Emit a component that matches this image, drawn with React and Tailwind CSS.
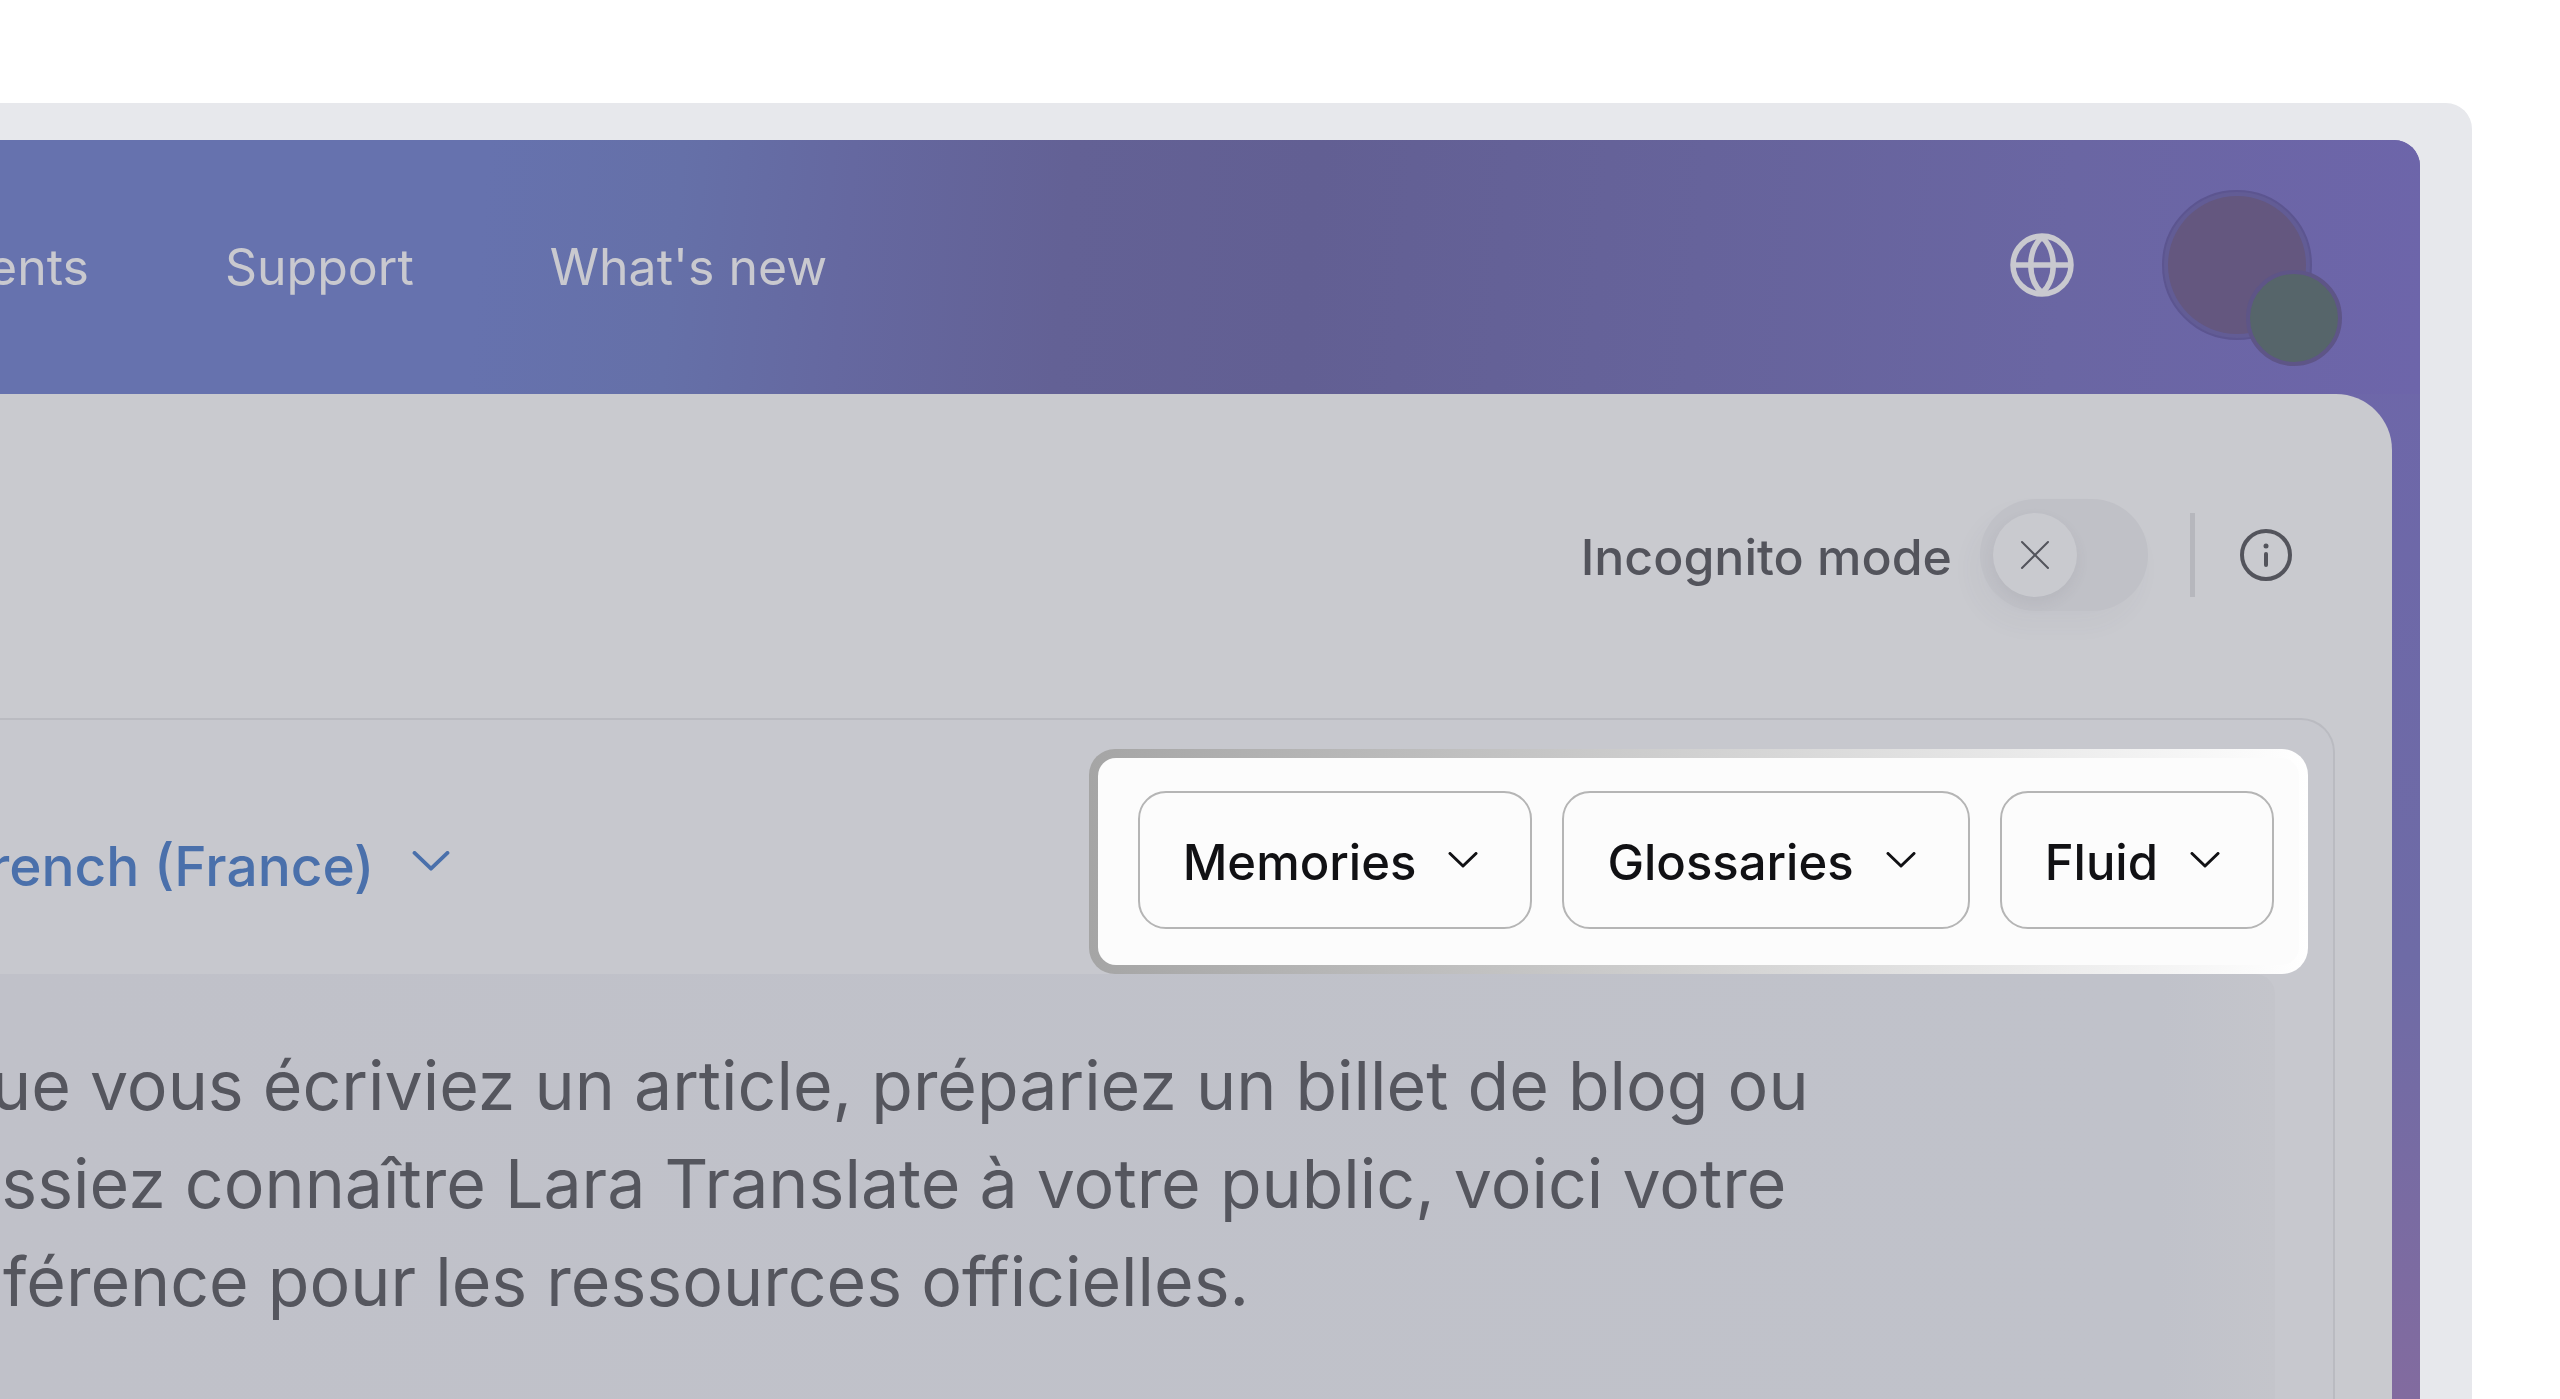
import React from 'react';

const Chevron = ({ className }) => (
    <svg viewBox="0 0 30 16" fill="none" stroke="currentColor" strokeWidth="3" strokeLinecap="round" strokeLinejoin="round" className={className} aria-hidden="true">
        <path d="M2 1.5 L15 14 L28 1.5" />
    </svg>
);

const GlobeIcon = () => (
    <svg viewBox="0 0 64 64" fill="none" stroke="currentColor" strokeWidth="5.5" strokeLinejoin="round" className="size-16" aria-hidden="true">
        <circle cx="32" cy="32" r="29" />
        <path d="M32 4 C17 18 17 46 32 60 C47 46 47 18 32 4 Z" />
        <path d="M3 32 H61" />
    </svg>
);

const InfoIcon = () => (
    <svg viewBox="0 0 52 52" fill="none" stroke="currentColor" strokeWidth="4" className="size-[52px]" aria-hidden="true">
        <circle cx="26" cy="26" r="24" />
        <path d="M26 25 V36" strokeLinecap="round" />
        <circle cx="26" cy="17" r="2.5" fill="currentColor" stroke="none" />
    </svg>
);

const Header = () => (
    <header className="flex h-[254px] items-center justify-between rounded-tr-[26px] bg-[linear-gradient(95deg,#6672ae_0%,#6672ae_20%,#6570a8_28%,#6568a0_35%,#636195_44%,#625f93_54%,#66639b_70%,#6a66a3_85%,#6d65aa_100%)] pr-[108px] text-[#c9c9cf]">
        <nav className="-ml-[180px] flex gap-[136px] whitespace-nowrap text-[50px] leading-[60px]">
            <a href="#documents">Documents</a>
            <a href="#support">Support</a>
            <a href="#whats-new">What's new</a>
        </nav>
        <div className="flex items-center gap-[88px] pb-1">
            <button type="button" aria-label="Language">
                <GlobeIcon />
            </button>
            <button type="button" aria-label="Account" className="relative size-[150px] rounded-full border-2 border-[#5c5590] bg-[#625c95] p-1">
                <span className="block size-full rounded-full bg-[#64577f]"></span>
                <span className="absolute -right-8 -bottom-7 size-24 rounded-full border-4 border-[#5e5587] bg-[#56656a]"></span>
            </button>
        </div>
    </header>
);

const Toolbar = () => (
    <div className="flex h-[324px] items-center justify-end pr-[100px] pb-[3px] text-[#53545c]">
        <label htmlFor="incognito" className="mr-[28px] pt-1 text-[50px] leading-[60px] font-medium">Incognito mode</label>
        <div className="relative h-28 w-[168px]">
            <input id="incognito" type="checkbox" role="switch" className="block size-full appearance-none rounded-full bg-[#c0c1c7] shadow-[-8px_14px_24px_rgba(80,80,95,0.04)]" />
            <span className="pointer-events-none absolute top-[14px] left-[13px] flex size-[84px] items-center justify-center rounded-full bg-[#c9cacf] shadow-[0_6px_14px_rgba(80,80,95,0.08)]">
                <svg viewBox="0 0 30 30" fill="none" stroke="currentColor" strokeWidth="2" strokeLinecap="round" className="size-[30px]" aria-hidden="true">
                    <path d="M2 2 L28 28 M28 2 L2 28" />
                </svg>
            </span>
        </div>
        <span className="mr-[45px] ml-[42px] h-[84px] w-[5px] bg-[#b6b7bd]"></span>
        <button type="button" aria-label="About incognito mode">
            <InfoIcon />
        </button>
    </div>
);

const OptionButton = ({ label }) => (
    <button type="button" className="flex h-[138px] items-center gap-[32px] rounded-[28px] border-2 border-[#b5b5b5] pr-[52px] pl-[43px] text-[49px] leading-[60px] font-medium text-[#111114]">
        <span className="pt-[6px]">{label}</span>
        <Chevron className="h-4 w-[30px]" />
    </button>
);

const LanguageRow = () => (
    <div className="flex items-center justify-between pt-[29px] pr-[25px]">
        <button type="button" className="-ml-[42px] flex items-center gap-[38px] text-[55px] leading-[64px] font-medium whitespace-nowrap text-[#4a70ab]">
            <span className="pt-2">French (France)</span>
            <Chevron className="w-[38px]" />
        </button>
        <div className="rounded-[26px] bg-linear-to-r from-[#a5a5a5] to-white p-[9px]">
            <div className="flex gap-[30px] rounded-[18px] bg-[#fcfcfc] pt-[33px] pr-[25px] pb-[36px] pl-[40px]">
                <OptionButton label="Memories" />
                <OptionButton label="Glossaries" />
                <OptionButton label="Fluid" />
            </div>
        </div>
    </div>
);

const Translation = () => (
    <div className="mr-[58px] flex-1 rounded-tr-[20px] bg-linear-to-r from-[#c0c1c9] via-[#c0c2ca] via-95% to-[#c4c5cb] pt-[62px]">
        <p className="-ml-[61px] text-[68px] leading-[98px] whitespace-nowrap text-[#55565e]">
            Que vous écriviez un article, prépariez un billet de blog ou<br />
            fassiez connaître Lara Translate à votre public, voici votre<br />
            référence pour les ressources officielles.
        </p>
    </div>
);

const App = () => {
    return (
        <div className="flex min-h-screen overflow-hidden bg-white pt-[103px] pr-[88px] font-['Inter',sans-serif]">
            <div className="flex min-w-0 flex-1 rounded-tr-[26px] bg-[#e7e8ec] pt-[37px] pr-[52px]">
                <div className="flex min-w-0 flex-1 flex-col rounded-tr-[26px] bg-linear-to-b from-[#6d65aa] via-[#6e6ba6] via-65% to-[#826b9f]">
                    <Header />
                    <main className="mr-7 flex flex-1 flex-col rounded-tr-[56px] bg-[#c9cacf]">
                        <Toolbar />
                        <section className="mr-[57px] flex flex-1 flex-col rounded-tr-[34px] border-t-2 border-r-2 border-[#babbc1] bg-[#c7c8ce]">
                            <LanguageRow />
                            <Translation />
                        </section>
                    </main>
                </div>
            </div>
        </div>
    );
};

export default App;
